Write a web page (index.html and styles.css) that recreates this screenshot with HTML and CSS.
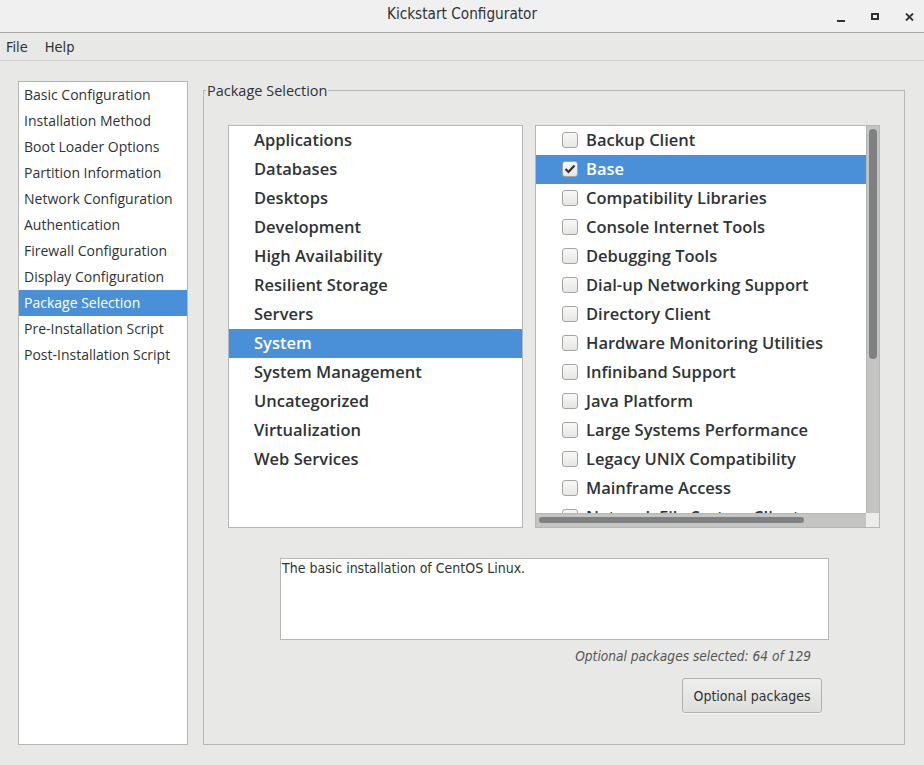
FILE: index.html
```html
<!DOCTYPE html>
<html>
<head>
<meta charset="utf-8">
<title>Kickstart Configurator</title>
<link rel="stylesheet" href="styles.css">
</head>
<body>
<div class="window">
  <div class="titlebar">
    <div class="title">Kickstart Configurator</div>
    <div class="controls">
      <span class="ctl ctl-min"></span>
      <span class="ctl ctl-max"></span>
      <svg class="ctl-close" width="9" height="8" viewBox="0 0 9 8"><path d="M1 0.5 L8 7.5 M8 0.5 L1 7.5" stroke="#2e3436" stroke-width="1.8" fill="none"/></svg>
    </div>
  </div>
  <div class="menubar">
    <span class="menu-item">File</span>
    <span class="menu-item">Help</span>
  </div>
  <div class="content">
    <ul class="sidebar">
      <li>Basic Configuration</li>
      <li>Installation Method</li>
      <li>Boot Loader Options</li>
      <li>Partition Information</li>
      <li>Network Configuration</li>
      <li>Authentication</li>
      <li>Firewall Configuration</li>
      <li>Display Configuration</li>
      <li class="selected">Package Selection</li>
      <li>Pre-Installation Script</li>
      <li>Post-Installation Script</li>
    </ul>
    <fieldset class="frame">
      <legend>Package Selection</legend>
      <div class="frame-body">
        <div class="lists">
          <ul class="groups">
            <li>Applications</li>
            <li>Databases</li>
            <li>Desktops</li>
            <li>Development</li>
            <li>High Availability</li>
            <li>Resilient Storage</li>
            <li>Servers</li>
            <li class="selected">System</li>
            <li>System Management</li>
            <li>Uncategorized</li>
            <li>Virtualization</li>
            <li>Web Services</li>
          </ul>
          <div class="packages">
            <ul class="pkg-list">
              <li><span class="check"></span>Backup Client</li>
              <li class="selected"><span class="check checked"><svg width="12" height="10" viewBox="0 0 12 10"><path d="M1.5 5 L4.5 8 L10.5 1.5" stroke="#2e3436" stroke-width="2.2" fill="none"/></svg></span>Base</li>
              <li><span class="check"></span>Compatibility Libraries</li>
              <li><span class="check"></span>Console Internet Tools</li>
              <li><span class="check"></span>Debugging Tools</li>
              <li><span class="check"></span>Dial-up Networking Support</li>
              <li><span class="check"></span>Directory Client</li>
              <li><span class="check"></span>Hardware Monitoring Utilities</li>
              <li><span class="check"></span>Infiniband Support</li>
              <li><span class="check"></span>Java Platform</li>
              <li><span class="check"></span>Large Systems Performance</li>
              <li><span class="check"></span>Legacy UNIX Compatibility</li>
              <li><span class="check"></span>Mainframe Access</li>
              <li><span class="check"></span>Network File System Client</li>
            </ul>
            <div class="vscroll"><div class="vthumb"></div></div>
            <div class="hscroll"><div class="hthumb"></div></div>
            <div class="corner"></div>
          </div>
        </div>
        <div class="description">The basic installation of CentOS Linux.</div>
        <div class="status">Optional packages selected: 64 of 129</div>
        <button class="btn">Optional packages</button>
      </div>
    </fieldset>
  </div>
</div>
</body>
</html>
```
FILE: styles.css
```css
* { box-sizing: border-box; }
html, body { margin: 0; padding: 0; }
body {
  width: 924px;
  height: 765px;
  background: #e8e8e7;
  font-family: "Open Sans", "Noto Sans", sans-serif;
  color: #2e3436;
  overflow: hidden;
}
.window { display: flex; flex-direction: column; height: 765px; }
.titlebar {
  height: 33px;
  background: #f0f0f0;
  border-bottom: 1px solid #a8a8a6;
  display: flex;
  align-items: center;
  justify-content: center;
  position: relative;
}
.title {
  font-family: "DejaVu Sans Condensed", "DejaVu Sans", sans-serif;
  font-stretch: condensed;
  font-size: 15.2px;
  color: #2e3436;
  margin-top: -4px;
}
.controls {
  position: absolute;
  right: 10px;
  top: 10px;
  display: flex;
  align-items: center;
  gap: 0;
}
.ctl { display: block; }
.ctl-min {
  width: 8px; height: 2px; background: #2e3436; margin-top: 10px; margin-right: 26px;
}
.ctl-max {
  width: 8px; height: 7px; border: 2px solid #2e3436; margin-right: 26px; margin-top: 1px;
}
.ctl-close { display: block; margin-top: 1px; }
.menubar {
  height: 28px;
  border-bottom: 1px solid #d2d2d0;
  display: flex;
  align-items: center;
  padding-left: 6px;
  gap: 17px;
  font-family: "DejaVu Sans Condensed", "DejaVu Sans", sans-serif;
  font-stretch: condensed;
  font-size: 14.5px;
  color: #2e3436;
}
.content {
  flex: 1;
  display: flex;
  padding: 20px 19px 20px 18px;
  gap: 15px;
  min-height: 0;
}
ul { list-style: none; margin: 0; padding: 0; }
.sidebar {
  width: 170px;
  background: #fff;
  border: 1px solid #b6b6b6;
  font-size: 14px;
}
.sidebar li {
  height: 26px;
  line-height: 26px;
  padding-left: 5px;
  color: #2e3436;
  white-space: nowrap;
}
.sidebar li.selected { background: #4a90d9; color: #fff; }
.frame {
  flex: 1;
  margin: 1px 0 0 0;
  padding: 0;
  border: 1px solid #b6b6b6;
  min-width: 0;
}
.frame legend {
  margin-left: 2px;
  padding: 0 1px;
  font-size: 14.5px;
  color: #2e3436;
  line-height: 17px;
}
.frame-body {
  display: flex;
  flex-direction: column;
  padding: 26px 24px 0 24px;
}
.lists {
  display: flex;
  gap: 12px;
  height: 403px;
}
.groups {
  width: 295px;
  background: #fff;
  border: 1px solid #b6b6b6;
  font-size: 16.5px;
  font-weight: 600;
}
.groups li {
  height: 29px;
  line-height: 28px;
  padding-left: 25px;
  color: #2e3436;
  white-space: nowrap;
}
.groups li.selected { background: #4a90d9; color: #fff; }
.packages {
  width: 345px;
  background: #fff;
  border: 1px solid #b6b6b6;
  display: grid;
  grid-template-columns: 1fr 13px;
  grid-template-rows: 1fr 14px;
  overflow: hidden;
}
.pkg-list {
  overflow: hidden;
  font-size: 16.5px;
  font-weight: 600;
  min-height: 0;
}
.pkg-list li {
  height: 29px;
  display: flex;
  align-items: center;
  padding-left: 26px;
  padding-bottom: 2px;
  white-space: nowrap;
  color: #2e3436;
}
.pkg-list li.selected { background: #4a90d9; color: #fff; }
.check {
  width: 16px;
  height: 16px;
  border: 1px solid #a4a4a2;
  border-radius: 3px;
  background: linear-gradient(#f8f8f7, #e6e6e4);
  margin-right: 8px;
  flex: none;
  display: flex;
  align-items: center;
  justify-content: center;
}
.check svg { display: block; }
.vscroll {
  background: #c4c4c3;
  border-left: 1px solid #b6b6b6;
  padding: 3px 2px 0 2px;
}
.vthumb {
  width: 8px;
  height: 230px;
  background: #7e8082;
  border-radius: 4px;
}
.hscroll {
  background: #c4c4c3;
  border-top: 1px solid #b6b6b6;
  padding: 3px 0 0 3px;
}
.hthumb {
  width: 265px;
  height: 6px;
  background: #7e8082;
  border-radius: 3px;
}
.corner { background: #ececeb; }
.description {
  margin: 30px 51px 0 52px;
  height: 82px;
  background: #fff;
  border: 1px solid #b6b6b6;
  padding: 1px 1px;
  font-family: "DejaVu Sans Condensed", "DejaVu Sans", sans-serif;
  font-stretch: condensed;
  font-size: 14px;
  color: #2e3436;
}
.status {
  align-self: flex-end;
  margin: 8px 69px 0 0;
  font-family: "DejaVu Sans Condensed", "DejaVu Sans", sans-serif;
  font-stretch: condensed;
  font-style: italic;
  font-size: 13.6px;
  color: #555753;
}
.btn {
  align-self: flex-end;
  margin: 14px 58px 0 0;
  width: 140px;
  height: 35px;
  border: 1px solid #b1b1af;
  border-radius: 3px;
  background: linear-gradient(#eeeeec, #dededc);
  font-family: "DejaVu Sans Condensed", "DejaVu Sans", sans-serif;
  font-stretch: condensed;
  font-size: 14px;
  color: #2e3436;
  box-shadow: 0 1px 0 rgba(255,255,255,0.6);
}
```
